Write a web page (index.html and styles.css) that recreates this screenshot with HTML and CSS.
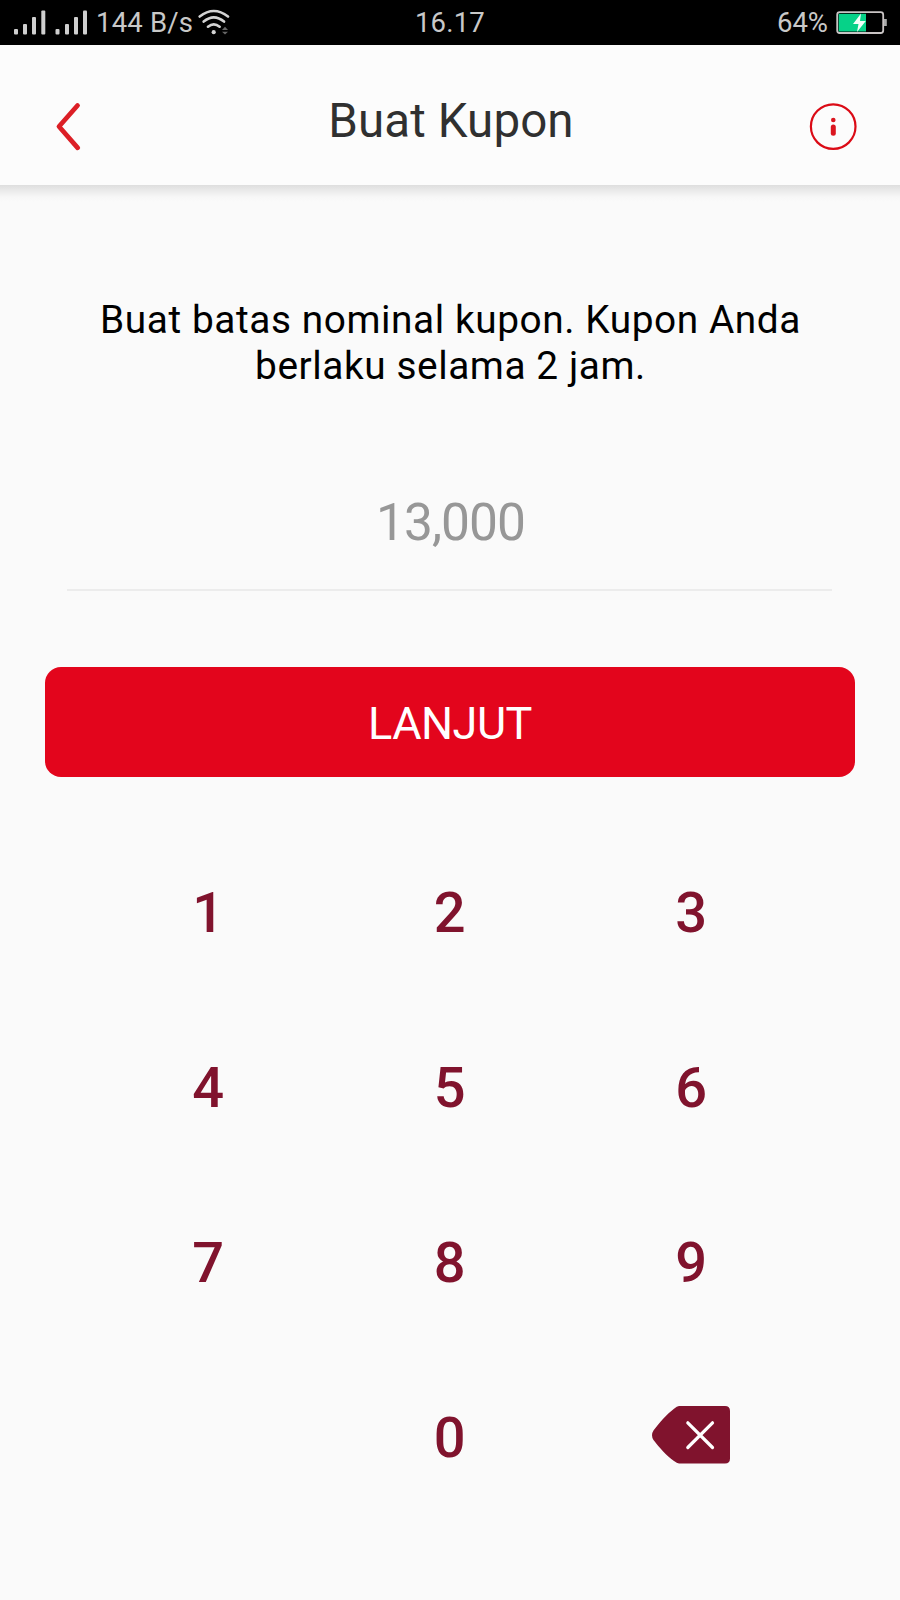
FILE: index.html
```html
<!DOCTYPE html>
<html lang="id">
<head>
<meta charset="utf-8">
<title>Buat Kupon</title>
<link rel="stylesheet" href="styles.css">
</head>
<body>
<div class="status">
  <div class="status-left">
    <svg class="signals" width="76" height="45" viewBox="0 0 76 45" fill="#cfcfcf">
      <rect x="0" y="29" width="4" height="5.5" rx="1"/><rect x="9" y="24" width="4" height="10.5" rx="1"/><rect x="18" y="17" width="4" height="17.5" rx="1"/><rect x="27.3" y="10.5" width="4" height="24" rx="1"/>
      <rect x="41.5" y="29" width="4" height="5.5" rx="1"/><rect x="51" y="24" width="4" height="10.5" rx="1"/><rect x="60" y="17" width="4" height="17.5" rx="1"/><rect x="69" y="10.5" width="4" height="24" rx="1"/>
    </svg>
    <span class="speed">144 B/s</span>
    <svg class="wifi" width="32" height="45" viewBox="198 0 32 45" fill="none" stroke="#d3d3d3" stroke-width="2.6" stroke-linecap="round">
      <path d="M199.7 16.5Q213.800 5.500 228 16.500M203.700 21.600Q213.800 13.200 224 21.600M208 26.700Q213.800 22 219.600 26.700"/>
      <circle cx="213.700" cy="32.200" r="2.100" fill="#d3d3d3" stroke="none"/>
      <path d="M222 30L225 26.800L228 30ZM222 31.800H228L225 34.600Z" fill="#666" stroke="none"/>
    </svg>
  </div>
  <span class="clock">16.17</span>
  <div class="status-right">
    <span class="percent">64%</span>
    <svg width="52" height="45" viewBox="836 0 52 45">
      <rect x="837.200" y="12.200" width="46" height="20.800" rx="2.500" fill="#000" stroke="#c9c4c4" stroke-width="1.800"/>
      <rect x="838.700" y="13.800" width="27.300" height="17.700" fill="#06d288"/>
      <rect x="884" y="19" width="2.800" height="7" fill="#aaa"/>
      <path d="M861 13.500L853 24H858.500L857 32L865.800 21H860Z" fill="#f2fff8"/>
    </svg>
  </div>
</div>
<header class="header">
  <svg class="back" width="28" height="50" viewBox="54 102 28 50" fill="none" stroke="#dc1f26" stroke-width="4.800" stroke-linecap="round" stroke-linejoin="round"><path d="M77.500 105.500L59 126.500L77.700 147.800"/></svg>
  <h1 class="title">Buat Kupon</h1>
  <svg class="info" width="48" height="48" viewBox="809 102 48 48"><circle cx="833.200" cy="126.600" r="22.300" fill="none" stroke="#db0b16" stroke-width="2.200"/><circle cx="833.300" cy="120" r="2.300" fill="#db1620"/><path d="M833.300 127V133.200" stroke="#db1620" stroke-width="5" stroke-linecap="round"/></svg>
</header>
<main class="content">
  <p class="intro">Buat batas nominal kupon. Kupon Anda<br>berlaku selama 2 jam.</p>
  <div class="amount">13,000</div>
  <button class="next">LANJUT</button>
  <div class="keypad">
    <span>1</span><span>2</span><span>3</span>
    <span>4</span><span>5</span><span>6</span>
    <span>7</span><span>8</span><span>9</span>
    <span></span><span>0</span>
    <span class="erase"><svg width="80" height="60" viewBox="651 1405 80 60"><path d="M679 1406H725Q730 1406 730 1411V1458.500Q730 1463.500 725 1463.500H679Q677 1463.300 674 1461C667 1456 659 1447.500 653.500 1440Q650.500 1435 653.500 1430.500C659 1423 667 1414 674 1408.700Q677 1406.300 679 1406Z" fill="#80132d"/><path d="M687.800 1422.800L712.500 1447.500M712.500 1422.800L687.800 1447.500" stroke="#fff" stroke-width="3.200" stroke-linecap="round"/></svg></span>
  </div>
</main>
</body>
</html>
```

FILE: styles.css
```css
* { box-sizing: border-box; }
body { margin: 0; width: 900px; height: 1600px; overflow: hidden; background: #fafafa; font-family: Roboto, sans-serif; }
svg { display: block; flex: none; }
.status { display: grid; grid-template-columns: 1fr auto 1fr; height: 45px; background: #000; color: #c8c8c8; font-size: 27.5px; line-height: 46px; white-space: nowrap; }
.status-left { display: flex; padding-left: 14px; }
.speed { width: 102px; margin-left: 6px; letter-spacing: .2px; }
.clock { letter-spacing: .2px; }
.status-right { display: flex; justify-content: flex-end; gap: 8px; padding-right: 12px; }
.header { display: flex; justify-content: space-between; align-items: flex-start; height: 140px; padding: 0 43px 0 54px; background: #fcfcfc; }
.back { margin-top: 57px; }
.title { margin: 0 0 0 11px; padding-top: 48px; font-size: 47.5px; line-height: 56px; font-weight: 400; color: #303030; letter-spacing: .1px; }
.info { margin-top: 57px; }
.content { padding-top: 112px; background: linear-gradient(#dedede, #ebebeb 6px, #f7f7f7 12px, #fafafa 17px); }
.intro { margin: 0; padding-left: 1px; font-size: 38.8px; line-height: 45.5px; text-align: center; letter-spacing: .58px; color: #000; white-space: nowrap; }
.amount { width: 765px; height: 93px; margin: 110px 0 0 67px; padding-left: 2px; border-bottom: 2px solid #ececec; font-size: 51.5px; line-height: 50px; text-align: center; letter-spacing: -1px; color: #979797; }
.next { display: block; width: 810px; height: 110px; margin: 76px 0 0 45px; padding: 4px 0 0; border: 0; border-radius: 16px; background: #e3051c; color: #fff; font: 400 45px/50px Roboto, sans-serif; letter-spacing: -.5px; }
.keypad { display: grid; grid-template-columns: repeat(3, 241.5px); grid-auto-rows: 175px; margin: 49px 0 0 87.5px; font-size: 56px; font-weight: 500; line-height: 175px; text-align: center; color: #80132d; }
.erase { display: flex; justify-content: center; padding: 54px 1px 0 0; }
```
